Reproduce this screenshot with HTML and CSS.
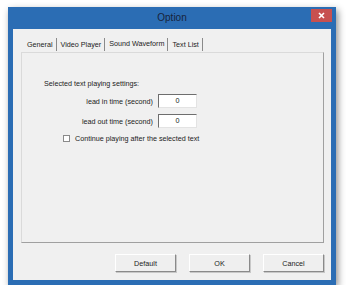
FILE: index.html
```html
<!DOCTYPE html>
<html lang="en">
<head>
  <meta charset="UTF-8">
  <title>Option</title>
  <link rel="stylesheet" href="styles.css">
</head>
<body>
  <div class="window">
    <div class="titlebar">
      <span></span>
      <span class="title">Option</span>
      <span class="close">
        <svg width="7" height="7" viewBox="0 0 7 7">
          <path d="M1 1 L6 6 M6 1 L1 6" stroke="#fff" stroke-width="1.6"/>
        </svg>
      </span>
    </div>
    <div class="client">
      <div class="tabs">
        <span class="tab">General</span>
        <span class="tab">Video Player</span>
        <span class="tab active">Sound Waveform</span>
        <span class="tab">Text List</span>
      </div>
      <div class="panel">
        <div class="heading">Selected text playing settings:</div>
        <div class="row">
          <label>lead in time (second)</label>
          <div class="field">0</div>
        </div>
        <div class="row">
          <label>lead out time (second)</label>
          <div class="field">0</div>
        </div>
        <div class="check">
          <span class="box"></span>
          <span>Continue playing after the selected text</span>
        </div>
      </div>
      <div class="buttons">
        <button>Default</button>
        <button>OK</button>
        <button>Cancel</button>
      </div>
    </div>
  </div>
</body>
</html>
```

FILE: styles.css
```css
* {
  box-sizing: border-box;
}
body {
  margin: 0;
  background: #fff;
  font-family: "Liberation Sans", Arial, sans-serif;
  font-size: 7.2px;
  color: #222;
}
.window {
  margin: 7px 0 0 8px;
  width: 328px;
  height: 278px;
  background: #2b6db4;
  box-shadow: 2px 3px 7px rgba(0,0,0,0.45);
  display: flex;
  flex-direction: column;
}
.titlebar {
  height: 22px;
  flex: none;
  display: grid;
  grid-template-columns: 1fr auto 1fr;
  align-items: start;
}
.title {
  font-size: 10px;
  color: #17233a;
  padding-top: 5px;
}
.close {
  justify-self: end;
  margin: 2px 4px 0 0;
  width: 21px;
  height: 13px;
  background: #c75050;
  display: flex;
  align-items: center;
  justify-content: center;
}
.client {
  flex: 1;
  margin: 0 5px 5px 5px;
  background: #f0f0f0;
  padding: 9px 7px 0 8px;
  display: flex;
  flex-direction: column;
}
.tabs {
  display: flex;
  height: 14px;
  padding-left: 6px;
}
.tab {
  padding: 2px 3px 0 0;
  border-right: 1px solid #8a8a8a;
  margin-right: 4px;
  height: 13px;
}
.tab.active {
  padding-top: 1px;
}
.panel {
  height: 191px;
  border: 1px solid #dadada;
  border-right-color: #a0a0a0;
  border-bottom-color: #a0a0a0;
  padding: 26px 0 0 22px;
}
.heading {
  margin-bottom: 6px;
}
.row {
  display: flex;
  align-items: center;
  gap: 5px;
  margin-bottom: 6px;
}
.row label {
  width: 109px;
  text-align: right;
}
.field {
  width: 39px;
  height: 14px;
  background: #fff;
  border: 1px solid #e3e3e3;
  border-top-color: #6e6e6e;
  border-left-color: #6e6e6e;
  text-align: center;
  line-height: 12px;
}
.check {
  display: flex;
  align-items: center;
  gap: 5px;
  padding-left: 19px;
}
.box {
  width: 7px;
  height: 7px;
  background: #fff;
  border: 1px solid #8a8a8a;
}
.buttons {
  display: flex;
  justify-content: flex-end;
  gap: 13px;
  margin-top: 11px;
}
button {
  width: 61px;
  height: 18px;
  padding: 0;
  font-family: inherit;
  font-size: 7.2px;
  color: #222;
  background: #efefef;
  border: 1px solid #fff;
  border-right-color: #8a8a8a;
  border-bottom-color: #8a8a8a;
  box-shadow: 1px 1px 0 #c8c8c8;
}
```
